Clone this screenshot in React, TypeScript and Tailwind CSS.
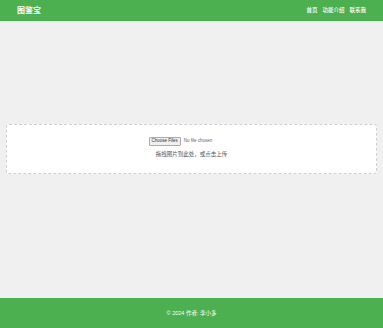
import React from "react";

const App = () => {
  return (
    <div
      className="flex min-h-screen flex-col bg-[#f0f0f0] text-[#333]"
      style={{ fontFamily: '"Liberation Sans", "Noto Sans CJK SC", sans-serif' }}
    >
      <header className="flex h-[21px] items-center justify-between bg-[#4caf50] px-[17px] text-white">
        <h1 className="text-[8px] font-bold leading-none">图鉴宝</h1>
        <nav className="flex items-center gap-[5px] text-[5.5px] font-medium leading-none">
          <a className="cursor-pointer">首页</a>
          <a className="cursor-pointer">功能介绍</a>
          <a className="cursor-pointer">联系我</a>
        </nav>
      </header>

      <main className="flex-1 px-[6px] pt-[103px]">
        <div className="flex h-[50px] flex-col items-center gap-[6px] rounded-[3px] border border-dashed border-[#d0d0d0] bg-white pt-[12px]">
          <input
            type="file"
            multiple
            accept="image/*"
            className="text-[4.5px] leading-none text-[#666] file:mr-[3px] file:rounded-[1px] file:border file:border-solid file:border-[#aaa] file:bg-[#f0f0f0] file:px-[2px] file:py-[1px] file:text-[#333]"
          />
          <p className="text-[5.5px] leading-none text-[#555]">拖拽图片到此处，或点击上传</p>
        </div>
      </main>

      <footer className="flex h-[30px] items-center justify-center bg-[#4caf50] text-[5.5px] text-white">
        <p>© 2024 作者: 李小多</p>
      </footer>
    </div>
  );
};

export default App;
